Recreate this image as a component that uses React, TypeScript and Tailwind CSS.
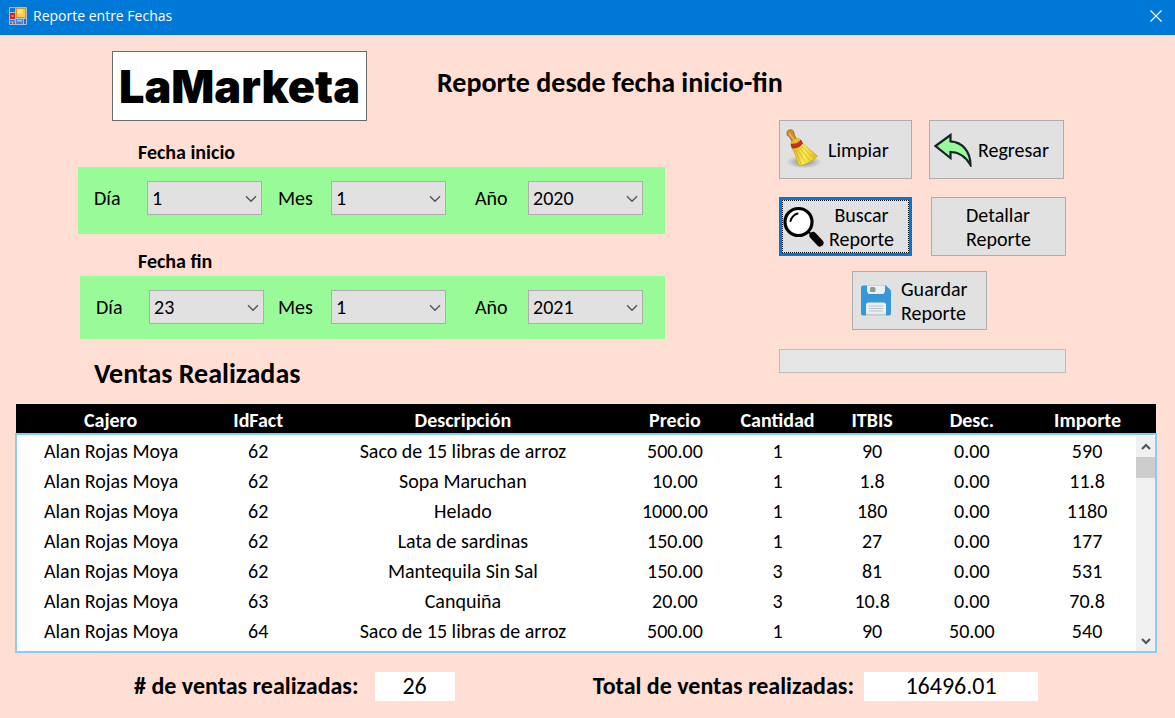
import React from "react";

type DateValue = { day: string; month: string; year: string };

const columns = [
  { name: "Cajero", width: "w-[16.6%]" },
  { name: "IdFact", width: "w-[9.3%]" },
  { name: "Descripción", width: "w-[26.6%]" },
  { name: "Precio", width: "w-[10.6%]" },
  { name: "Cantidad", width: "w-[7.4%]" },
  { name: "ITBIS", width: "w-[9.2%]" },
  { name: "Desc.", width: "w-[8.3%]" },
  { name: "Importe", width: "w-[12%]" },
];

const sales = [
  ["Alan Rojas Moya", "62", "Saco de 15 libras de arroz", "500.00", "1", "90", "0.00", "590"],
  ["Alan Rojas Moya", "62", "Sopa Maruchan", "10.00", "1", "1.8", "0.00", "11.8"],
  ["Alan Rojas Moya", "62", "Helado", "1000.00", "1", "180", "0.00", "1180"],
  ["Alan Rojas Moya", "62", "Lata de sardinas", "150.00", "1", "27", "0.00", "177"],
  ["Alan Rojas Moya", "62", "Mantequila Sin Sal", "150.00", "3", "81", "0.00", "531"],
  ["Alan Rojas Moya", "63", "Canquiña", "20.00", "3", "10.8", "0.00", "70.8"],
  ["Alan Rojas Moya", "64", "Saco de 15 libras de arroz", "500.00", "1", "90", "50.00", "540"],
];

const days = Array.from({ length: 31 }, (_, i) => String(i + 1));
const months = Array.from({ length: 12 }, (_, i) => String(i + 1));
const years = ["2019", "2020", "2021", "2022"];

function Field({ id, label, value, options, className = "" }: {
  id: string; label: string; value: string; options: string[]; className?: string;
}) {
  return (
    <div className={`flex items-center ${className}`}>
      <label htmlFor={id} className="w-[53px]">{label}</label>
      <div className="relative">
        <select
          id={id}
          defaultValue={value}
          className="h-[34px] w-[115px] appearance-none border border-[#adadad] bg-[#e1e1e1] pl-1 text-xl leading-8 outline-none"
        >
          {options.map((o) => <option key={o}>{o}</option>)}
        </select>
        <svg viewBox="0 0 12 8" className="pointer-events-none absolute top-[14px] right-[5px] h-2 w-3" fill="none" stroke="#555" strokeWidth="1.4">
          <path d="M1 1.2 6 6.2 11 1.2" />
        </svg>
      </div>
    </div>
  );
}

function DatePanel({ id, title, value, className }: {
  id: string; title: string; value: DateValue; className: string;
}) {
  return (
    <fieldset className="text-xl">
      <legend className="ml-[60px] h-[27px] text-xl leading-6 font-bold">{title}</legend>
      <div className={`flex items-start bg-[#98fb98] pr-[22px] pl-4 ${className}`}>
        <Field id={`${id}-dia`} label="Día" value={value.day} options={days} />
        <Field id={`${id}-mes`} label="Mes" value={value.month} options={months} className="ml-auto" />
        <Field id={`${id}-ano`} label="Año" value={value.year} options={years} className="ml-[29px]" />
      </div>
    </fieldset>
  );
}

function FormIcon() {
  return (
    <svg viewBox="0 0 18 18" className="h-[18px] w-[18px]">
      <rect width="18" height="18" rx="1" fill="#b4bcc4" />
      <rect x="1" y="1" width="5" height="4" fill="#1674cf" />
      <rect x="1" y="6" width="5" height="6" fill="#c3282d" />
      <rect x="2.5" y="8" width="2" height="2" fill="#ef8c80" />
      <rect x="7" y="1" width="10" height="10" fill="#d99a17" />
      <rect x="8" y="2" width="8" height="8" fill="#f9cc45" />
      <rect x="8.5" y="2.5" width="5" height="4" fill="#fde48d" />
      <rect x="1" y="13" width="5" height="1.6" fill="#2c7fd3" />
      <rect x="1" y="15.5" width="2" height="1.5" fill="#1674cf" />
      <rect x="4" y="15.5" width="2" height="1.5" fill="#1674cf" />
      <rect x="7" y="12" width="7" height="5" fill="#4a7fe0" />
      <rect x="8" y="12.6" width="5" height="2" fill="#93b8f5" />
      <rect x="15" y="12" width="2" height="5" fill="#1674cf" />
    </svg>
  );
}

function BroomIcon() {
  return (
    <svg viewBox="0 0 38 42" className="h-[42px] w-[38px] shrink-0">
      <defs>
        <radialGradient id="broom-shadow">
          <stop offset="0" stopColor="#555" stopOpacity="0.75" />
          <stop offset="1" stopColor="#777" stopOpacity="0" />
        </radialGradient>
        <linearGradient id="broom-straw" x1="0" x2="1">
          <stop offset="0" stopColor="#d8b51b" />
          <stop offset="0.5" stopColor="#fbea5b" />
          <stop offset="1" stopColor="#dcb70f" />
        </linearGradient>
      </defs>
      <ellipse cx="20" cy="33" rx="18" ry="6.5" fill="url(#broom-shadow)" />
      <path d="M3 2.600C4.500 0.200 8.100 0 9.500 2.200L10.500 6 13 11 8.500 13.500 5.500 8 3.100 6.200Z" fill="#d08a2b" stroke="#9a5e16" strokeWidth="0.7" />
      <path d="M5 4 10.500 11.500" stroke="#edb562" strokeWidth="1.300" />
      <path d="M7 13.500C8 10.500 13 8.500 16 10L18 14 33.500 27C31 31 21 36.500 15 36.500Q12.500 32 11.500 26L7.500 18Z" fill="url(#broom-straw)" stroke="#c29d14" strokeWidth="0.6" />
      <path d="M11 19 17 35M13 19 21.500 34M15 18 26 32M17 17 30 29M9 13 15 11" fill="none" stroke="#d3ad17" strokeWidth="0.7" />
      <path d="M7 15.500Q13 15.600 17 11.200L18.600 14.400Q14.500 19.300 8.300 19Z" fill="#cc2929" stroke="#8c1515" strokeWidth="0.6" />
    </svg>
  );
}

function BackIcon() {
  return (
    <svg viewBox="0 0 38 34" className="h-[34px] w-[38px] shrink-0">
      <path d="M1.500 13 16.500 2V8.300C28 9 36.500 18 36.500 32 31.500 23.500 26 19 16.500 19V25Z" fill="#98fb98" stroke="#18222a" strokeWidth="2.200" strokeLinejoin="miter" />
    </svg>
  );
}

function SearchIcon() {
  return (
    <svg viewBox="0 0 42 42" className="h-[42px] w-[42px] shrink-0">
      <circle cx="15.500" cy="16" r="13.500" fill="#fff" stroke="#000" strokeWidth="3.200" />
      <path d="M7.500 15Q9 9.500 14.500 7.500" fill="none" stroke="#000" strokeWidth="2" strokeLinecap="round" />
      <path d="M25 25.500 29 29" stroke="#000" strokeWidth="2" />
      <path d="M30 29.500 37 37" stroke="#000" strokeWidth="7" strokeLinecap="round" />
    </svg>
  );
}

function SaveIcon() {
  return (
    <svg viewBox="0 0 30 30" className="h-[31px] w-[30px] shrink-0">
      <path d="M2 0H25L30 5V28a2 2 0 0 1-2 2H2a2 2 0 0 1-2-2V2A2 2 0 0 1 2 0Z" fill="#3498db" />
      <path d="M6 0H24V6.500a2.500 2.500 0 0 1-2.500 2.500h-13A2.500 2.500 0 0 1 6 6.500Z" fill="#ecf0f1" />
      <path d="M6 6.500A2.500 2.500 0 0 0 8.500 9h13A2.500 2.500 0 0 0 24 6.500" fill="none" stroke="#2c80b8" strokeWidth="0.8" />
      <rect x="9" y="1.500" width="5.500" height="5" rx="1.500" fill="#8b999c" />
      <path d="M5 30V19.500A2.500 2.500 0 0 1 7.500 17h15a2.500 2.500 0 0 1 2.500 2.500V30Z" fill="#ecf0f1" />
      <path d="M5 28.200H25V30H5Z" fill="#c8d0d3" />
      <path d="M8 20.500H22M8 23H22M8 25.500H22" stroke="#bcc3c7" strokeWidth="1" />
    </svg>
  );
}

const buttonBase = "flex h-[59px] items-center border border-[#adadad] bg-[#e1e1e1] text-xl leading-6";

export default function App() {
  return (
    <div className="min-h-screen bg-[#ffdfd3] font-['Carlito','Lato',sans-serif] text-black">
      <header className="flex h-[35px] items-center justify-between bg-[#0078d7] pr-[13px] pb-1 pl-[9px] font-['Open_Sans',sans-serif] text-sm text-white">
        <div className="flex items-center gap-1.5">
          <FormIcon />
          <span>Reporte entre Fechas</span>
        </div>
        <button type="button" aria-label="Cerrar">
          <svg viewBox="0 0 12 12" className="h-3 w-3" stroke="#fff" strokeWidth="1.200">
            <path d="M0.500.500 11.500 11.500M11.500.500.500 11.500" />
          </svg>
        </button>
      </header>

      <main>
        <div className="flex pr-[109px]">
          <div className="min-w-0 flex-1 pt-4">
            <div className="flex items-start">
              <div className="ml-28 flex h-[70px] w-[255px] shrink-0 items-center justify-center border border-[#6b6b6b] bg-white font-['Inter',sans-serif] text-[45px] leading-none font-black">
                LaMarketa
              </div>
              <h1 className="ml-[70px] pt-4 text-[28px] leading-8 font-bold whitespace-nowrap">Reporte desde fecha inicio-fin</h1>
            </div>
            <div className="mt-[19px] mr-[114px] ml-[78px]">
              <DatePanel id="inicio" title="Fecha inicio" value={{ day: "1", month: "1", year: "2020" }} className="h-[67px] pt-[14px]" />
            </div>
            <div className="mt-[15px] mr-[114px] ml-[78px]">
              <DatePanel id="fin" title="Fecha fin" value={{ day: "23", month: "1", year: "2021" }} className="ml-[2px] h-[63px] pt-[14px]" />
            </div>
            <h2 className="mt-[19px] ml-[94px] text-[28px] leading-8 font-bold">Ventas Realizadas</h2>
          </div>

          <div className="flex w-[287px] flex-col pt-[85px]">
            <div className="flex justify-between pr-[2px]">
              <button type="button" className={`${buttonBase} w-[133px] gap-1.5 pl-1`}><BroomIcon />Limpiar</button>
              <button type="button" className={`${buttonBase} w-[135px] gap-1.5 pl-1`}><BackIcon />Regresar</button>
            </div>
            <div className="mt-[18px] flex justify-between">
              <button type="button" className="flex h-[59px] w-[133px] items-center border-3 border-[#0078d7] bg-[#e1e1e1] text-xl leading-6">
                <span className="flex h-full w-full items-center gap-1 border border-dotted border-black">
                  <SearchIcon />
                  <span>Buscar<br />Reporte</span>
                </span>
              </button>
              <button type="button" className={`${buttonBase} w-[135px] justify-center`}>
                <span className="text-left">Detallar<br />Reporte</span>
              </button>
            </div>
            <button type="button" className={`${buttonBase} mt-[15px] mr-1.5 w-[135px] gap-2.5 self-center pl-2`}>
              <SaveIcon />
              <span className="text-left">Guardar<br />Reporte</span>
            </button>
            <div role="progressbar" aria-label="Progreso" aria-valuenow={0} className="mt-[19px] h-6 border border-[#bcbcbc] bg-[#e6e6e6]" />
          </div>
        </div>

        <div className="relative mt-[14px] mr-[18px] ml-[15px]">
          <table className="w-full table-fixed border-collapse text-center text-xl">
            <thead className="bg-black text-white">
              <tr>
                {columns.map((c) => <th key={c.name} className={`${c.width} p-0 pt-1 leading-[25px] font-bold`}>{c.name}</th>)}
              </tr>
            </thead>
            <tbody className="border-2 border-[#8bcbf5] bg-white">
              {sales.map((row, i) => (
                <tr key={i} className="group">
                  {row.map((cell, j) => <td key={j} className="p-0 pt-[2px] leading-7 group-last:pb-1.5">{cell}</td>)}
                </tr>
              ))}
            </tbody>
          </table>
          <div className="absolute top-8 right-[2px] bottom-[2px] flex w-[19px] flex-col items-center bg-[#f0f0f0] pt-[7px] pb-1.5">
            <svg viewBox="0 0 10 7" className="h-[7px] w-[10px]" fill="none" stroke="#555" strokeWidth="2.200"><path d="M1 6 5 2 9 6" /></svg>
            <div className="mt-[7px] h-[21px] w-full bg-[#cdcdcd]" />
            <svg viewBox="0 0 10 7" className="mt-auto h-[7px] w-[10px]" fill="none" stroke="#555" strokeWidth="2.200"><path d="M1 1 5 5 9 1" /></svg>
          </div>
        </div>

        <div className="flex items-center justify-between pt-[18px] pr-[137px] pl-[134px] text-2xl leading-[30px]">
          <div className="flex items-center gap-4">
            <label htmlFor="count" className="font-bold">{"# de ventas realizadas:"}</label>
            <input id="count" readOnly value="26" className="h-[29px] w-20 bg-white text-center" />
          </div>
          <div className="flex items-center gap-2.5">
            <label htmlFor="total" className="font-bold">Total de ventas realizadas:</label>
            <input id="total" readOnly value="16496.01" className="h-[29px] w-[174px] bg-white text-center" />
          </div>
        </div>
      </main>
    </div>
  );
}
